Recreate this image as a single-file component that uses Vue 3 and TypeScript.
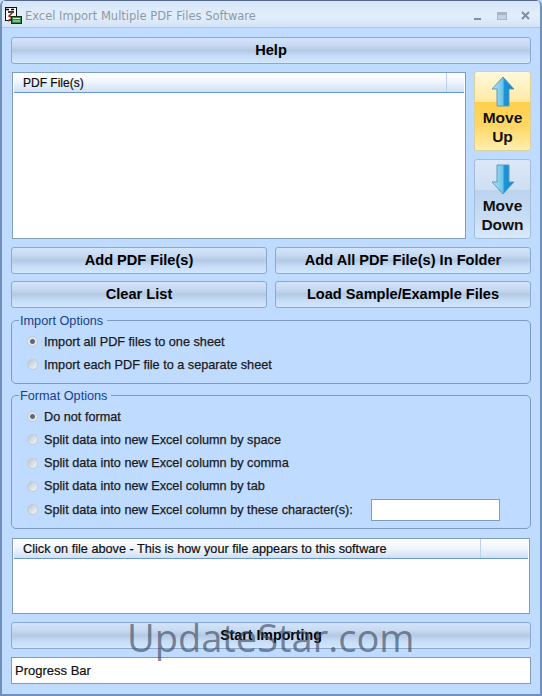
<script setup lang="ts">
const importOpts = [
  { label: 'Import all PDF files to one sheet', on: true },
  { label: 'Import each PDF file to a separate sheet', on: false },
]
const formatOpts = [
  { label: 'Do not format', on: true },
  { label: 'Split data into new Excel column by space', on: false },
  { label: 'Split data into new Excel column by comma', on: false },
  { label: 'Split data into new Excel column by tab', on: false },
]
</script>

<template>
  <div class="window">
    <div class="titlebar">
      <svg class="appicon" width="17" height="17" viewBox="0 0 17 17">
        <rect x="0.500" y="0.500" width="11" height="13" fill="#fff" stroke="#111" stroke-width="1" />
        <path d="M1 2.500h3M6 2.500h3M3 5h6" stroke="#000" stroke-width="1.500" />
        <path d="M8 5L4 9l4 2-5 3" stroke="#8a2a1c" stroke-width="1.500" fill="none" />
        <rect x="6.500" y="9.500" width="10" height="7" fill="#2e8a3e" stroke="#06360f" stroke-width="1" />
        <path d="M8 11.500h7M8 14h7" stroke="#dff3dc" stroke-width="1" />
      </svg>
      <span class="title">Excel Import Multiple PDF Files Software</span>
      <div class="winctrls">
        <svg class="ctl-min" width="7" height="9" viewBox="0 0 7 9"><rect x="0" y="7" width="7" height="2" fill="#7d8fa6" /></svg>
        <svg width="10" height="8" viewBox="0 0 10 8"><rect x="0.500" y="0.500" width="9" height="7" fill="#c3d3e6" stroke="#a5b6ca" /><rect x="1" y="1" width="8" height="2" fill="#a5b6ca" /></svg>
        <svg width="9" height="9" viewBox="0 0 9 9"><path d="M1 1l7 7M8 1l-7 7" stroke="#7d8fa6" stroke-width="2" /></svg>
      </div>
    </div>

    <div class="body">
      <button class="btn help"><span class="lab">Help</span></button>

      <div class="listrow">
        <div class="listview big">
          <div class="lvhead"><span class="lvcol">PDF File(s)</span><span class="lvrest"></span></div>
        </div>
        <div class="moves">
          <button class="movebtn hot">
            <svg class="arrow" width="24" height="31" viewBox="0 0 24 31">
              <defs>
                <linearGradient id="au" x1="0" x2="1" y1="0" y2="0"><stop offset="0" stop-color="#b4e2f5" /><stop offset="0.5" stop-color="#6cc3ea" /><stop offset="0.55" stop-color="#1e95d6" /><stop offset="1" stop-color="#1587c9" /></linearGradient>
              </defs>
              <path d="M12 1L23 13H18V30H6V13H1Z" fill="url(#au)" stroke="#5b9cc0" stroke-width="1" />
            </svg>
            <span>Move<br />Up</span>
          </button>
          <button class="movebtn">
            <svg class="arrow" width="24" height="31" viewBox="0 0 24 31">
              <defs>
                <linearGradient id="ad" x1="0" x2="1" y1="0" y2="0"><stop offset="0" stop-color="#b4e2f5" /><stop offset="0.5" stop-color="#6cc3ea" /><stop offset="0.55" stop-color="#1e95d6" /><stop offset="1" stop-color="#1587c9" /></linearGradient>
              </defs>
              <path d="M12 30L23 18H18V1H6V18H1Z" fill="url(#ad)" stroke="#5b9cc0" stroke-width="1" />
            </svg>
            <span>Move<br />Down</span>
          </button>
        </div>
      </div>

      <div class="btngrid">
        <button class="btn"><span class="lab">Add PDF File(s)</span></button>
        <button class="btn"><span class="lab">Add All PDF File(s) In Folder</span></button>
        <button class="btn"><span class="lab">Clear List</span></button>
        <button class="btn"><span class="lab">Load Sample/Example Files</span></button>
      </div>

      <fieldset class="group g-import">
        <legend>Import Options</legend>
        <div v-for="o in importOpts" :key="o.label" class="radio">
          <span class="dot" :class="{ on: o.on }"></span>{{ o.label }}
        </div>
      </fieldset>

      <fieldset class="group g-format">
        <legend>Format Options</legend>
        <div v-for="o in formatOpts" :key="o.label" class="radio">
          <span class="dot" :class="{ on: o.on }"></span>{{ o.label }}
        </div>
        <div class="radio">
          <span class="dot"></span>Split data into new Excel column by these character(s):
          <span class="charbox"></span>
        </div>
      </fieldset>

      <div class="listview small">
        <div class="lvhead"><span class="lvcol wide">Click on file above - This is how your file appears to this software</span><span class="lvrest"></span></div>
      </div>

      <button class="btn start">
        <span class="lab">Start Importing</span>
        <span class="watermark">UpdateStar.com</span>
      </button>

      <div class="progress">Progress Bar</div>
    </div>
  </div>
</template>

<style>
html, body { margin: 0; padding: 0; background: #bfdbff; }
</style>

<style scoped>
.window {
  width: 542px;
  height: 696px;
  box-sizing: border-box;
  display: flex;
  flex-direction: column;
  background: #bfdbff;
  font-family: "Liberation Sans", Arial, sans-serif;
  color: #000;
  border-left: 2px solid #6f8fbd;
  border-right: 2px solid #6f8fbd;
  border-bottom: 2px solid #6f8fbd;
  border-radius: 6px 6px 0 0;
  overflow: hidden;
}
.titlebar {
  height: 28px;
  flex: none;
  box-sizing: border-box;
  display: flex;
  align-items: center;
  padding: 3px 10px 0 3px;
  background: linear-gradient(#d5e5f8, #e3eefb 55%, #d3e4f8);
  border-top: 1px solid #54698a;
  border-bottom: 1px solid #a9c6ec;
}
.appicon { flex: none; }
.title {
  margin-left: 3px;
  font-family: "DejaVu Sans", sans-serif;
  font-size: 11.500px;
  color: #8d99a8;
}
.winctrls {
  margin-left: auto;
  display: flex;
  align-items: center;
  gap: 14px;
}
.ctl-min { margin-right: 2px; }
.body {
  flex: 1;
  min-height: 0;
  display: flex;
  flex-direction: column;
  padding: 9px 9px 0;
}
.btn {
  position: relative;
  display: block;
  height: 27px;
  margin: 0;
  padding: 0 0 2px;
  box-sizing: border-box;
  border: 1px solid #8aa9d2;
  border-radius: 3px;
  background: linear-gradient(#d3e5fa 0, #c6d9f0 30%, #b4c9e4 50%, #c5dcf7 72%, #d3e7fd 100%);
  font-family: "Liberation Sans", Arial, sans-serif;
  font-weight: 700;
  font-size: 14.600px;
  color: #000;
}
.help { width: 520px; flex: none; }
.listrow {
  display: flex;
  gap: 8px;
  margin-top: 8px;
}
.listview {
  box-sizing: border-box;
  background: #fff;
  border: 1px solid #7f9db9;
}
.big { width: 455px; height: 167px; margin-left: 1px; }
.lvhead {
  display: flex;
  height: 20px;
  box-sizing: border-box;
  margin: 0 1px;
  background: linear-gradient(#fff, #f1f6fd 45%, #cfe0f5);
  border-bottom: 1px solid #6d97c9;
  font-size: 12px;
  line-height: 21px;
  -webkit-text-stroke: 0.2px #111;
}
.lvcol {
  width: 433px;
  padding-left: 9px;
  box-sizing: border-box;
  border-right: 1px solid #bcd0ea;
  color: #0c0c0c;
}
.wide { width: 467px; font-size: 12.700px; }
.lvrest { flex: 1; }
.moves {
  display: flex;
  flex-direction: column;
  gap: 8px;
  width: 57px;
  margin-top: -1px;
}
.movebtn {
  height: 80px;
  width: 57px;
  margin: 0;
  padding: 4px 0 0;
  box-sizing: border-box;
  display: flex;
  flex-direction: column;
  align-items: center;
  border: 1px solid #a3bcd9;
  border-radius: 3px;
  background: linear-gradient(#dbe8f8 0, #cfdff3 38%, #bcd2ee 38.500%, #c7dcf5 72%, #d8e9fc 100%);
  font-family: "Liberation Sans", Arial, sans-serif;
  font-weight: 700;
  font-size: 15.500px;
  line-height: 18.500px;
  color: #111;
}
.hot {
  border-color: #d9cf9f;
  background: linear-gradient(#fff9dc 0, #ffe9a5 38%, #ffd049 38.500%, #ffd766 70%, #ffefb0 100%);
}
.arrow { flex: none; margin-bottom: 2px; }
.btngrid {
  display: grid;
  grid-template-columns: 256px 256px;
  gap: 7px 8px;
  margin-top: 8px;
}
.group {
  margin: 0;
  min-width: 0;
  box-sizing: border-box;
  width: 520px;
  padding: 0 0 0 15px;
  border: 1px solid #7c9ac4;
  border-radius: 5px;
}
.group legend {
  margin-left: -8px;
  padding: 2px 4px 0 1px;
  font-size: 12.700px;
  line-height: 14px;
  color: #15428b;
}
.g-import { height: 72px; margin-top: 4px; padding-top: 2px; }
.g-format { height: 142px; margin-top: 3px; padding-top: 2px; }
.radio {
  display: flex;
  align-items: center;
  height: 23.250px;
  color: #1a1a1a;
  font-size: 12.700px;
  -webkit-text-stroke: 0.25px #1a1a1a;
  white-space: nowrap;
}
.dot {
  flex: none;
  width: 11px;
  height: 11px;
  margin-right: 6px;
  box-sizing: border-box;
  border-radius: 50%;
  border: 1px solid #c2cbd6;
  background: linear-gradient(135deg, #bcc4ce, #f5f7fa);
}
.dot.on {
  background: radial-gradient(circle, #5f6b78 0 2px, #dfe7f0 3px);
}
.charbox {
  margin-left: 18px;
  width: 129px;
  height: 22px;
  box-sizing: border-box;
  background: #fff;
  border: 1px solid #7f9db9;
}
.small { width: 518px; height: 76px; margin: 9px 0 0 1px; }
.start {
  width: 520px;
  flex: none;
  margin-top: 8px;
  font-size: 14.200px;
}
.watermark {
  position: absolute;
  left: 115px;
  top: -7px;
  font-family: "Open Sans", sans-serif;
  font-weight: 400;
  font-size: 38px;
  line-height: 42px;
  color: rgba(55, 68, 85, 0.62);
  white-space: nowrap;
}
.progress {
  width: 520px;
  height: 27px;
  margin-top: 8px;
  box-sizing: border-box;
  background: #fff;
  border: 1px solid #7f9db9;
  font-size: 13px;
  line-height: 25px;
  padding-left: 3px;
  color: #111;
  -webkit-text-stroke: 0.2px #111;
}
</style>
